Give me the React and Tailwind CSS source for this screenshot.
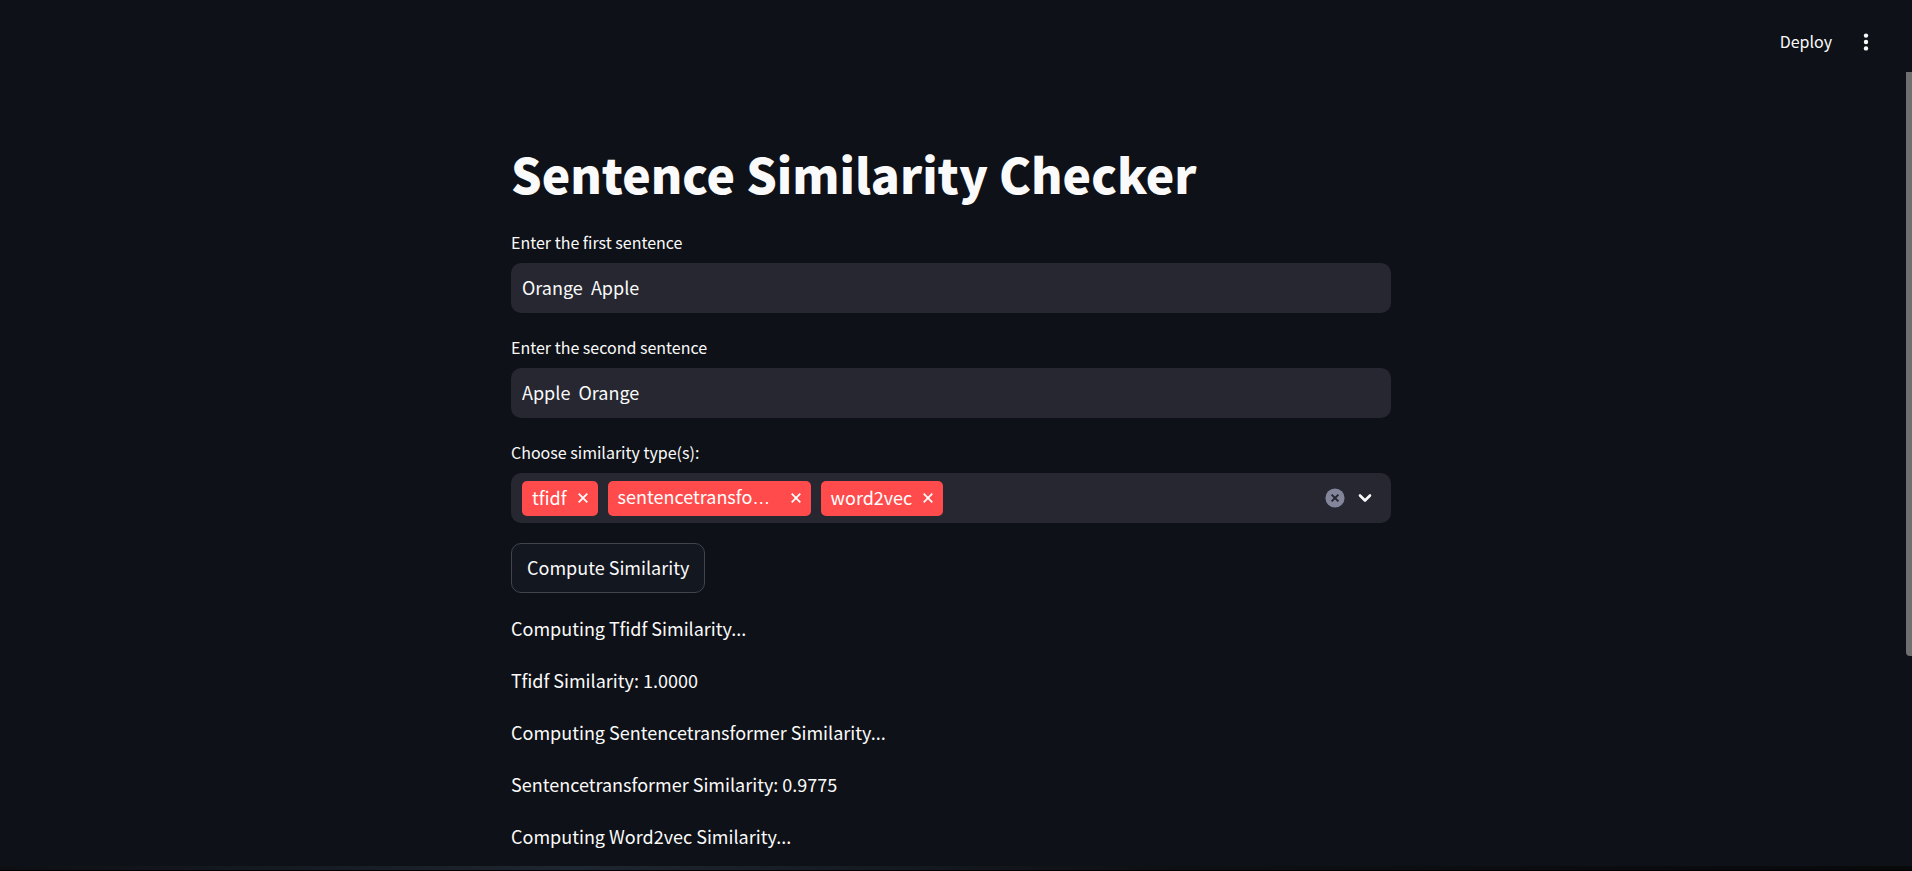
import { useState } from 'react';

const RESULTS = [
  'Computing Tfidf Similarity...',
  'Tfidf Similarity: 1.0000',
  'Computing Sentencetransformer Similarity...',
  'Sentencetransformer Similarity: 0.9775',
  'Computing Word2vec Similarity...',
];

const MAX_TAG_CHARS = 15;

function TextField({ id, label, initial }) {
  const [value, setValue] = useState(initial);
  return (
    <div className="mb-[23px] flex flex-col gap-2.5">
      <label htmlFor={id} className="self-start text-base/[22px]">{label}</label>
      <input
        id={id}
        type="text"
        value={value}
        onChange={(e) => setValue(e.target.value)}
        className="h-[50px] w-full rounded-[10px] bg-[#262730] px-[11px] pb-0.5 text-lg outline-none"
      />
    </div>
  );
}

function Tag({ name, onRemove }) {
  const long = name.length > MAX_TAG_CHARS;
  return (
    <span className="flex h-[35px] items-center gap-[11px] rounded-[5px] bg-[#ff4b4b] px-2.5 text-lg/[30px] text-white">
      {long ? (
        <span className="w-[162px] pb-0.5 whitespace-nowrap" title={name}>
          {name.slice(0, MAX_TAG_CHARS)}
          <span className="font-['Liberation_Sans',sans-serif]">…</span>
        </span>
      ) : (
        <span className="pb-0.5">{name}</span>
      )}
      <button type="button" aria-label={`Remove ${name}`} onClick={onRemove} className="shrink-0">
        <svg viewBox="0 0 10 10" className="size-2.5" fill="none" stroke="currentColor" strokeWidth="1.7">
          <path d="M.7.7l8.6 8.6M9.3.7L.7 9.3" />
        </svg>
      </button>
    </span>
  );
}

function SimilaritySelect() {
  const [tags, setTags] = useState(['tfidf', 'sentencetransformer', 'word2vec']);
  return (
    <div className="mb-5 flex flex-col gap-2.5">
      <label htmlFor="types" className="self-start text-base/[22px]">Choose similarity type(s):</label>
      <div className="flex h-[50px] items-center gap-2.5 rounded-[10px] bg-[#262730] pr-4 pl-[11px]">
        {tags.map((t) => (
          <Tag key={t} name={t} onRemove={() => setTags(tags.filter((x) => x !== t))} />
        ))}
        <input id="types" type="text" role="combobox" aria-expanded="false" className="min-w-0 flex-1 bg-transparent text-lg outline-none" />
        <button type="button" aria-label="Clear all" onClick={() => setTags([])}>
          <svg viewBox="0 0 20 20" className="size-5">
            <circle cx="10" cy="10" r="9.6" fill="#83859a" />
            <path d="M6.6 6.6l6.8 6.8M13.4 6.6l-6.8 6.8" stroke="#262730" strokeWidth="2" fill="none" />
          </svg>
        </button>
        <button type="button" aria-label="Open options">
          <svg viewBox="0 0 20 20" className="size-5" fill="none" stroke="#fafafa" strokeWidth="2.6" strokeLinecap="round" strokeLinejoin="round">
            <path d="M5 7.5l5 5 5-5" />
          </svg>
        </button>
      </div>
    </div>
  );
}

export default function App() {
  return (
    <div className="relative flex h-screen flex-col overflow-hidden bg-[#0e1117] font-['Source_Sans_Pro','Noto_Sans_CJK_JP',sans-serif] text-[#fafafa]">
      <header className="flex h-[72px] shrink-0 items-center justify-end gap-6 pt-3 pr-9">
        <button type="button" className="pb-0.5 text-base">Deploy</button>
        <button type="button" aria-label="Menu" className="flex size-5 items-center justify-center">
          <svg viewBox="0 0 6 18" className="h-[18px] w-1.5" fill="currentColor">
            <circle cx="3" cy="2.6" r="2.2" />
            <circle cx="3" cy="9" r="2.2" />
            <circle cx="3" cy="15.4" r="2.2" />
          </svg>
        </button>
      </header>

      <main className="min-h-0 flex-1 overflow-hidden pr-2.5">
        <div className="mx-auto w-full max-w-[880px] pt-[71px]">
          <h1 className="mb-7 text-5xl/[60px] font-black">Sentence Similarity Checker</h1>
          <TextField id="first" label="Enter the first sentence" initial="Orange  Apple" />
          <TextField id="second" label="Enter the second sentence" initial="Apple  Orange" />
          <SimilaritySelect />
          <button type="button" className="h-[50px] rounded-[10px] border border-[#41444c] bg-[#131720] px-[15px] pb-0.5 text-lg">
            Compute Similarity
          </button>
          <div className="mt-5 flex flex-col gap-[22px] text-lg/[30px]">
            {RESULTS.map((r) => (
              <p key={r}>{r}</p>
            ))}
          </div>
        </div>
      </main>

      <div className="h-[5px] shrink-0 border-b border-black bg-linear-to-r from-[#0d0f13] via-[#0e1114] via-60% to-[#08090b]">
        <div className="h-full w-3/5 bg-linear-to-r from-transparent via-[#1e2631] to-transparent" />
      </div>

      <div aria-hidden="true" className="absolute top-[72px] right-0 h-[67%] w-1.5 rounded-bl-sm bg-[#6f6f70]" />
    </div>
  );
}
